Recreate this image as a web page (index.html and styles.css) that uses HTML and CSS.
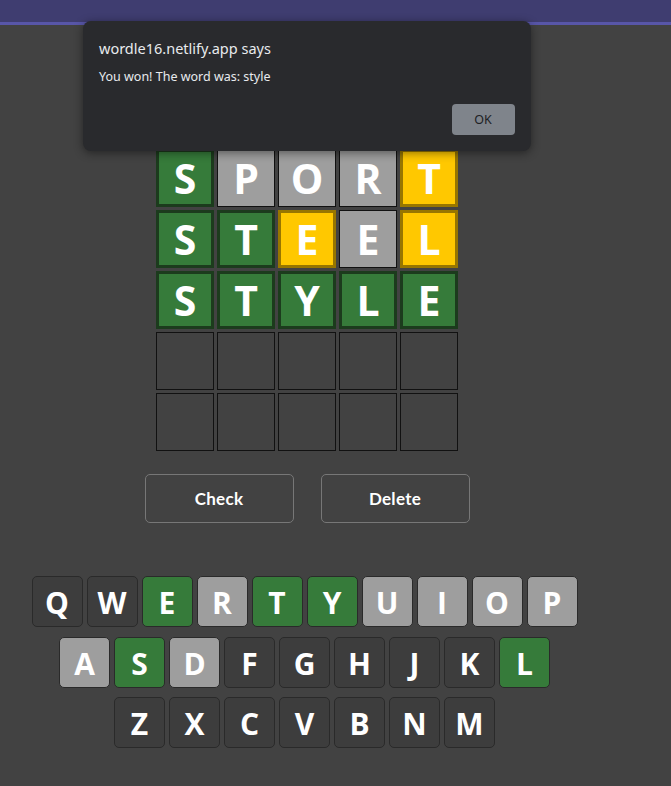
FILE: index.html
```html
<!DOCTYPE html>
<html lang="en">
<head>
<meta charset="utf-8">
<title>Wordle</title>
<link rel="stylesheet" href="styles.css">
</head>
<body>
<header class="topbar"></header>
<main class="game">
  <section class="board">
    <div class="row">
      <div class="tile green">S</div><div class="tile gray">P</div><div class="tile gray">O</div><div class="tile gray">R</div><div class="tile yellow">T</div>
    </div>
    <div class="row">
      <div class="tile green">S</div><div class="tile green">T</div><div class="tile yellow">E</div><div class="tile gray">E</div><div class="tile yellow">L</div>
    </div>
    <div class="row">
      <div class="tile green">S</div><div class="tile green">T</div><div class="tile green">Y</div><div class="tile green">L</div><div class="tile green">E</div>
    </div>
    <div class="row">
      <div class="tile"></div><div class="tile"></div><div class="tile"></div><div class="tile"></div><div class="tile"></div>
    </div>
    <div class="row">
      <div class="tile"></div><div class="tile"></div><div class="tile"></div><div class="tile"></div><div class="tile"></div>
    </div>
  </section>
  <div class="actions">
    <button class="action">Check</button>
    <button class="action">Delete</button>
  </div>
  <section class="keyboard">
    <div class="krow">
      <div class="key">Q</div><div class="key">W</div><div class="key green">E</div><div class="key gray">R</div><div class="key green">T</div><div class="key green">Y</div><div class="key gray">U</div><div class="key gray">I</div><div class="key gray">O</div><div class="key gray">P</div>
    </div>
    <div class="krow">
      <div class="key gray">A</div><div class="key green">S</div><div class="key gray">D</div><div class="key">F</div><div class="key">G</div><div class="key">H</div><div class="key">J</div><div class="key">K</div><div class="key green">L</div>
    </div>
    <div class="krow">
      <div class="key">Z</div><div class="key">X</div><div class="key">C</div><div class="key">V</div><div class="key">B</div><div class="key">N</div><div class="key">M</div>
    </div>
  </section>
</main>
<div class="dialog">
  <div class="dialog-title">wordle16.netlify.app says</div>
  <div class="dialog-msg">You won! The word was: style</div>
  <div class="dialog-foot"><button class="ok">OK</button></div>
</div>
</body>
</html>
```
FILE: styles.css
```css
html, body {
  margin: 0;
  padding: 0;
}
body {
  background: #424242;
  font-family: "Open Sans", "Noto Sans", sans-serif;
  width: 671px;
  height: 786px;
  overflow: hidden;
}
.topbar {
  height: 22px;
  background: #3f3d70;
  border-bottom: 3px solid #5856a8;
}
.game {
  width: 614px;
  display: flex;
  flex-direction: column;
  align-items: center;
}
.board {
  margin-top: 124px;
  display: flex;
  flex-direction: column;
  gap: 3px;
}
.row {
  display: flex;
  gap: 3px;
}
.tile {
  box-sizing: border-box;
  width: 58px;
  height: 58px;
  border: 1.5px solid #111111;
  background: #424242;
  color: #ffffff;
  font-weight: 700;
  font-size: 41px;
  line-height: 1;
  display: flex;
  align-items: center;
  justify-content: center;
}
.tile.green {
  background: #367b3a;
  border: 3px solid #1c3b1d;
}
.tile.yellow {
  background: #ffc800;
  border: 3px solid #977600;
}
.tile.gray {
  background: #9e9e9e;
  border: 1.5px solid #111111;
}
.actions {
  margin-top: 23px;
  display: flex;
  gap: 27px;
}
.action {
  box-sizing: border-box;
  width: 149px;
  height: 49px;
  background: transparent;
  border: 1px solid #777777;
  border-radius: 5px;
  color: #ffffff;
  font-family: "Lato", "Open Sans", sans-serif;
  font-weight: 700;
  font-size: 17px;
  letter-spacing: 0.3px;
  padding: 0;
}
.keyboard {
  align-self: flex-start;
  width: 609px;
  margin-top: 53px;
  display: flex;
  flex-direction: column;
  align-items: center;
  gap: 9.5px;
}
.krow {
  display: flex;
  gap: 4px;
}
.key {
  box-sizing: border-box;
  width: 51px;
  height: 51px;
  border: 1px solid #2a2a2a;
  border-radius: 5px;
  background: #3d3d3d;
  color: #ffffff;
  font-weight: 700;
  font-size: 30px;
  display: flex;
  align-items: center;
  justify-content: center;
  padding-top: 2px;
}
.key.green {
  background: #367b3a;
}
.key.gray {
  background: #9e9e9e;
}
.dialog {
  position: absolute;
  left: 83px;
  top: 21px;
  width: 448px;
  height: 130px;
  box-sizing: border-box;
  background: #292a2d;
  border-radius: 8px;
  box-shadow: 0 2px 10px rgba(0, 0, 0, 0.45);
  padding: 16px 16px 16px 16px;
  display: flex;
  flex-direction: column;
  color: #e8eaed;
  font-family: "Noto Sans", "Open Sans", sans-serif;
}
.dialog-title {
  font-size: 14.5px;
  line-height: 20px;
  margin-top: 1px;
}
.dialog-msg {
  font-size: 12.5px;
  line-height: 18px;
  margin-top: 10px;
}
.dialog-foot {
  margin-top: auto;
  display: flex;
  justify-content: flex-end;
  padding-right: 0.5px;
}
.ok {
  width: 63px;
  height: 31px;
  background: #7f848b;
  border: none;
  border-radius: 4px;
  color: #202124;
  font-family: "Noto Sans", "Open Sans", sans-serif;
  font-size: 12.5px;
  padding: 0;
}
```
